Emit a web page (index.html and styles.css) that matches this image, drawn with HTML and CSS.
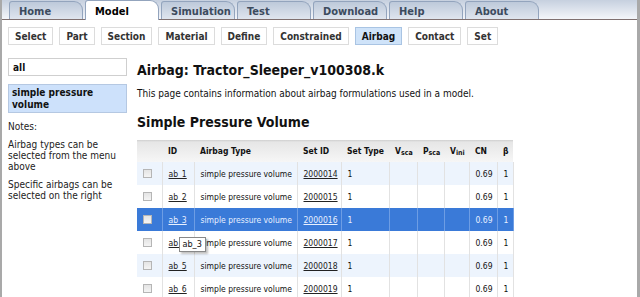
FILE: index.html
```html
<!DOCTYPE html>
<html>
<head>
<meta charset="utf-8">
<link rel="stylesheet" href="styles.css">
</head>
<body>
<div class="page">
  <div class="tabs">
    <div class="tab">Home</div>
    <div class="tab active">Model</div>
    <div class="tab">Simulation</div>
    <div class="tab">Test</div>
    <div class="tab">Download</div>
    <div class="tab">Help</div>
    <div class="tab">About</div>
  </div>
  <div class="subnav">
    <span class="btn">Select</span>
    <span class="btn">Part</span>
    <span class="btn">Section</span>
    <span class="btn">Material</span>
    <span class="btn">Define</span>
    <span class="btn">Constrained</span>
    <span class="btn on">Airbag</span>
    <span class="btn">Contact</span>
    <span class="btn">Set</span>
  </div>
  <div class="body">
    <div class="side">
      <div class="search">all</div>
      <div class="pick">simple pressure volume</div>
      <p class="note">Notes:</p>
      <p class="note">Airbag types can be selected from the menu above</p>
      <p class="note">Specific airbags can be selected on the right</p>
    </div>
    <div class="main">
      <h1>Airbag: Tractor_Sleeper_v100308.k</h1>
      <p class="intro">This page contains information about airbag formulations used in a model.</p>
      <h2>Simple Pressure Volume</h2>
      <table class="grid">
        <thead>
          <tr>
            <th class="c0"></th>
            <th class="c1">ID</th>
            <th class="c2">Airbag Type</th>
            <th class="c3">Set ID</th>
            <th class="c4">Set Type</th>
            <th class="c5">V<sub>sca</sub></th>
            <th class="c6">P<sub>sca</sub></th>
            <th class="c7">V<sub>ini</sub></th>
            <th class="c8">CN</th>
            <th class="c9">β</th>
          </tr>
        </thead>
        <tbody>
          <tr class="alt">
            <td><span class="cb"></span></td><td><a>ab_1</a></td><td>simple pressure volume</td><td><a>2000014</a></td><td>1</td><td></td><td></td><td></td><td>0.69</td><td>1</td>
          </tr>
          <tr>
            <td><span class="cb"></span></td><td><a>ab_2</a></td><td>simple pressure volume</td><td><a>2000015</a></td><td>1</td><td></td><td></td><td></td><td>0.69</td><td>1</td>
          </tr>
          <tr class="sel">
            <td><span class="cb"></span></td><td><a>ab_3</a></td><td>simple pressure volume</td><td><a>2000016</a></td><td>1</td><td></td><td></td><td></td><td>0.69</td><td>1</td>
          </tr>
          <tr>
            <td><span class="cb"></span></td><td class="tipcell"><a>ab_4</a><span class="tip">ab_3</span></td><td>simple pressure volume</td><td><a>2000017</a></td><td>1</td><td></td><td></td><td></td><td>0.69</td><td>1</td>
          </tr>
          <tr class="alt">
            <td><span class="cb"></span></td><td><a>ab_5</a></td><td>simple pressure volume</td><td><a>2000018</a></td><td>1</td><td></td><td></td><td></td><td>0.69</td><td>1</td>
          </tr>
          <tr>
            <td><span class="cb"></span></td><td><a>ab_6</a></td><td>simple pressure volume</td><td><a>2000019</a></td><td>1</td><td></td><td></td><td></td><td>0.69</td><td>1</td>
          </tr>
        </tbody>
      </table>
    </div>
  </div>
</div>
</body>
</html>
```
FILE: styles.css
```css
html, body {
  margin: 0;
  padding: 0;
  background: #fff;
}
body {
  font-family: "DejaVu Sans Condensed", "DejaVu Sans", sans-serif;
  color: #111;
}
.page {
  width: 635px;
  height: 297px;
  overflow: hidden;
  border-left: 2px solid #a9a9a9;
  border-right: 3px solid #a9a9a9;
}
.tabs {
  display: flex;
  gap: 2px;
  padding-left: 7px;
  height: 20px;
  border-bottom: 1px solid #7f7070;
  background: linear-gradient(#c6d0df, #f4f6fa);
  box-sizing: border-box;
  align-items: flex-end;
}
.tab {
  width: 74px;
  height: 18px;
  box-sizing: border-box;
  border: 1px solid #93a4bd;
  border-bottom: none;
  border-radius: 3px 9px 0 0;
  background: linear-gradient(#bdc9da, #dfe5ee);
  font-size: 11px;
  font-weight: bold;
  color: #3c4b5e;
  padding: 3px 0 0 9px;
  line-height: 13px;
}
.tab.active {
  background: #fff;
  color: #000;
  height: 20px;
  margin-bottom: -1px;
  padding-top: 4px;
}
.subnav {
  display: flex;
  gap: 6px;
  padding: 7px 0 0 6px;
}
.btn {
  display: block;
  height: 18px;
  box-sizing: border-box;
  border: 1px solid #dcdcdc;
  padding: 2px 6px 0;
  font-size: 10px;
  line-height: 13px;
  font-weight: bold;
  color: #333;
  background: #fff;
}
.btn.on {
  background: #cfe3f9;
  border-color: #a9c4e3;
  color: #111;
}
.body {
  display: flex;
  padding-top: 13px;
}
.side {
  width: 119px;
  margin-left: 6px;
  font-size: 10px;
}
.search {
  height: 18px;
  box-sizing: border-box;
  border: 1px solid #cfcfcf;
  padding: 2px 4px 0;
  font-weight: bold;
  line-height: 13px;
}
.pick {
  margin-top: 8px;
  height: 29px;
  box-sizing: border-box;
  border: 1px solid #b5c8e2;
  background: #cde1fb;
  padding: 2px 3px;
  font-weight: bold;
  line-height: 12px;
}
.note {
  margin: 8px 0 0 0;
  line-height: 11px;
  color: #222;
}
.note + .note {
  margin-top: 7px;
}
.main {
  margin-left: 10px;
  flex: 1;
}
h1 {
  margin: 3px 0 0;
  font-size: 14px;
  line-height: 18px;
}
.intro {
  margin: 8px 0 0;
  font-size: 10px;
  line-height: 13px;
}
h2 {
  margin: 13px 0 0;
  font-size: 14px;
  line-height: 18px;
}
.grid {
  margin-top: 9px;
  border-collapse: collapse;
  font-size: 8.5px;
}
.grid th {
  height: 22px;
  padding: 0 0 0 6px;
  text-align: left;
  font-weight: bold;
  background: linear-gradient(#cfcfcf 0, #e6e6e6 2px, #f6f6f6 100%);
  color: #111;
  box-sizing: border-box;
}
.grid td {
  height: 23px;
  padding: 0 0 0 6px;
  border-left: 1px solid #e2e2e2;
  border-right: 1px solid #e2e2e2;
  color: #111;
  box-sizing: border-box;
  white-space: nowrap;
}
.grid td:first-child {
  border-left: none;
}
.grid sub {
  font-size: 7px;
  vertical-align: -1px;
}
.c0 { width: 25px; }
.c1 { width: 32px; }
.c2 { width: 103px; }
.c3 { width: 44px; }
.c4 { width: 48px; }
.c5 { width: 28px; }
.c6 { width: 27px; }
.c7 { width: 25px; }
.c8 { width: 28px; }
.c9 { width: 16px; }
.grid tr.alt td {
  background: #edf4fd;
}
.grid tr.sel td {
  background: #3a7ad8;
  color: #e8f0ff;
  border-color: #6d9de4;
}
.grid tr.sel a {
  color: #e8f0ff;
}
.grid a {
  color: #222;
  text-decoration: underline;
}
.cb {
  display: block;
  width: 9px;
  height: 9px;
  box-sizing: border-box;
  border: 1px solid #b5b5b5;
  background: linear-gradient(#e4e4e4, #f4f4f4);
}
.tipcell {
  position: relative;
}
.tip {
  position: absolute;
  left: 16px;
  top: 6px;
  background: #fff;
  border: 1px solid #888;
  padding: 1px 3px;
  font-size: 9px;
  line-height: 11px;
  color: #111;
  box-shadow: 2px 2px 2px rgba(0,0,0,0.25);
  z-index: 2;
}
```
